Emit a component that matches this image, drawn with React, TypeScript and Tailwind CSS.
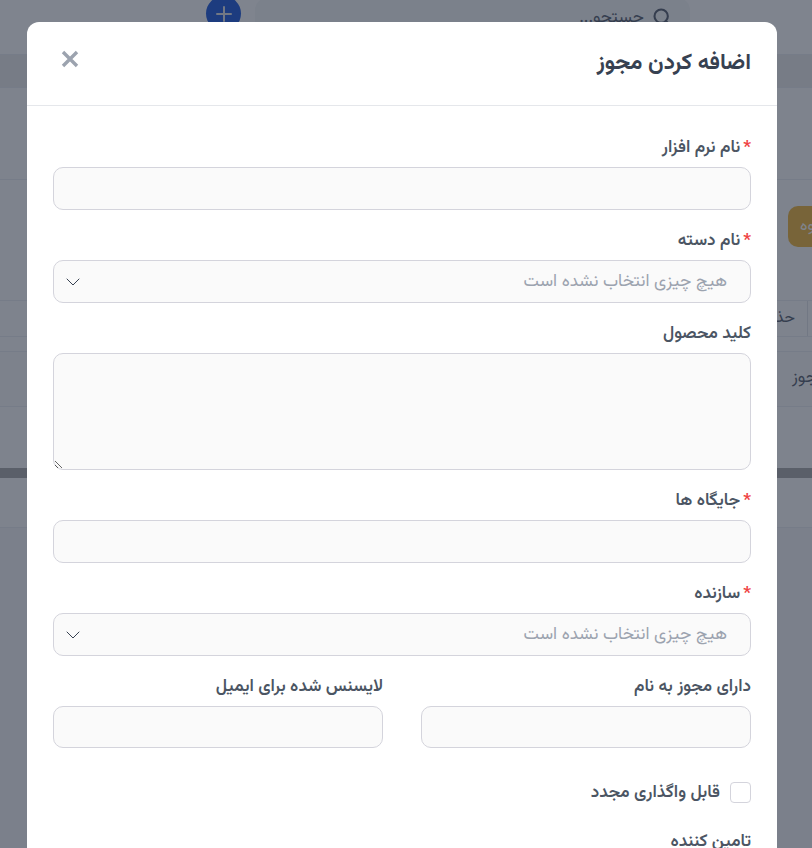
import { ChevronDown, Plus, Search } from "lucide-react";

function Label({ text, required }: { text: string; required?: boolean }) {
  return (
    <label className="flex items-center gap-[3px] h-[22px] translate-y-[1px] text-[17.2px] leading-[22px] font-semibold text-[#4b5563]">
      {required && <span className="text-[#ef4444] font-bold">*</span>}
      {text}
    </label>
  );
}

function TextInput({ className = "h-[43px]" }: { className?: string }) {
  return <input className={`mt-[9px] block w-full rounded-[10px] border border-[#d4d4dc] bg-[#fafafa] outline-none ${className}`} />;
}

function SelectBox() {
  return (
    <div className="mt-[9px] flex items-center justify-between w-full h-[43px] rounded-[10px] border border-[#d4d4dc] bg-[#fafafa] pr-[23px] pl-[7px]">
      <span className="text-[17.25px] text-[#9ca3af]">هیچ چیزی انتخاب نشده است</span>
      <ChevronDown className="w-[24px] h-[24px] text-[#374151] mt-[1px]" strokeWidth={1} />
    </div>
  );
}

export default function App() {
  return (
    <div dir="ltr" className="relative w-[812px] h-[848px] overflow-hidden bg-[#fcfcfd] font-['Vazirmatn','Noto_Sans','DejaVu_Sans',sans-serif]">
      {/* page behind the dialog */}
      <div className="h-[55px] bg-white border-b border-[#eceef2] flex items-start pl-[206px] gap-[14px]">
        <div className="w-[35px] h-[35px] -mt-[4px] rounded-full bg-[#3b6fe0] flex items-center justify-center">
          <Plus className="w-6 h-6 text-[#e5e7eb]" />
        </div>
        <div dir="rtl" className="w-[435px] h-[45px] -mt-[2px] rounded-[12px] bg-[#f7f8f9] flex items-center gap-2 pr-[18px] text-[#6b7280] text-[17px]">
          <Search className="w-5 h-5 mt-[-8px]" strokeWidth={2.5} />
          <span className="mt-[-3px]">جستجو...</span>
        </div>
      </div>
      <div className="h-[33px] bg-[#eeeeee] border-b border-[#eceef2]" />
      <div className="h-[92px] border-b border-[#eceef2]" />
      <div className="h-[26px]" />
      <div className="flex pl-[788px] w-[920px]">
        <div dir="rtl" className="w-[100px] h-[41px] rounded-[10px] bg-[#f0bf55] flex items-center justify-end pl-[12px] text-white text-[16px]">گروه</div>
      </div>
      <div className="h-[54px] border-b border-[#eceef2]" />
      <div className="h-[36px] flex pl-[760px] w-[900px] border-b border-[#eceef2]">
        <div className="w-[48px] border-r border-[#e5e7eb] flex items-center justify-end pr-[12px] text-[#6b7280] text-[16px]">حذف</div>
      </div>
      <div className="h-[14px]" />
      <div className="h-[56px] flex items-center pl-[792px] w-[900px] bg-[#fbfbfb] border-y border-[#eceef2] text-[#6b7280] text-[17px]">مجوز</div>
      <div className="h-[61px]" />
      <div className="h-[10px] bg-[#b4b4b4]" />
      <div className="h-[50px] bg-[#fcfcfd] border-b border-[#eceef2]" />
      <div className="h-[320px] bg-[#f6f6f8]" />

      {/* dialog */}
      <div className="absolute inset-0 bg-[#000a1e]/50 pl-[27px] pt-[22px]">
        <div dir="rtl" className="w-[750px] rounded-t-[12px] bg-white">
          <div className="h-[84px] border-b border-[#e5e7eb] flex items-center justify-between pr-[26px] pl-[34px]">
            <h2 className="text-[22.4px] font-bold text-[#374151] mt-[1px]">اضافه کردن مجوز</h2>
            <svg viewBox="0 0 18 18" className="w-[18px] h-[18px] mt-[-10px] text-[#9ca3af]" fill="none" stroke="currentColor" strokeWidth="3.4">
              <path d="M2 2 16 16M16 2 2 16" />
            </svg>
          </div>
          <div className="px-[26px] pt-[30px]">
            <Label text="نام نرم افزار" required />
            <TextInput />
            <div className="mt-[19px]">
              <Label text="نام دسته" required />
              <SelectBox />
            </div>
            <div className="mt-[19px]">
              <Label text="کلید محصول" />
              <textarea dir="rtl" className="mt-[9px] block w-full h-[117px] rounded-[10px] border border-[#d4d4dc] bg-[#fafafa] outline-none" />
            </div>
            <div className="mt-[19px]">
              <Label text="جایگاه ها" required />
              <TextInput />
            </div>
            <div className="mt-[19px]">
              <Label text="سازنده" required />
              <SelectBox />
            </div>
            <div className="mt-[19px] grid grid-cols-2 gap-[38px]">
              <div>
                <Label text="دارای مجوز به نام" />
                <TextInput className="h-[42px]" />
              </div>
              <div>
                <Label text="لایسنس شده برای ایمیل" />
                <TextInput className="h-[42px]" />
              </div>
            </div>
            <div className="mt-[32px] flex items-center gap-[10px]">
              <input type="checkbox" className="appearance-none w-[21px] h-[21px] rounded-[4px] border border-[#d4d4dc] bg-white" />
              <span className="text-[17.2px] font-semibold text-[#4b5563]">قابل واگذاری مجدد</span>
            </div>
            <div className="mt-[24px]">
              <Label text="تامین کننده" />
            </div>
          </div>
        </div>
      </div>
    </div>
  );
}
